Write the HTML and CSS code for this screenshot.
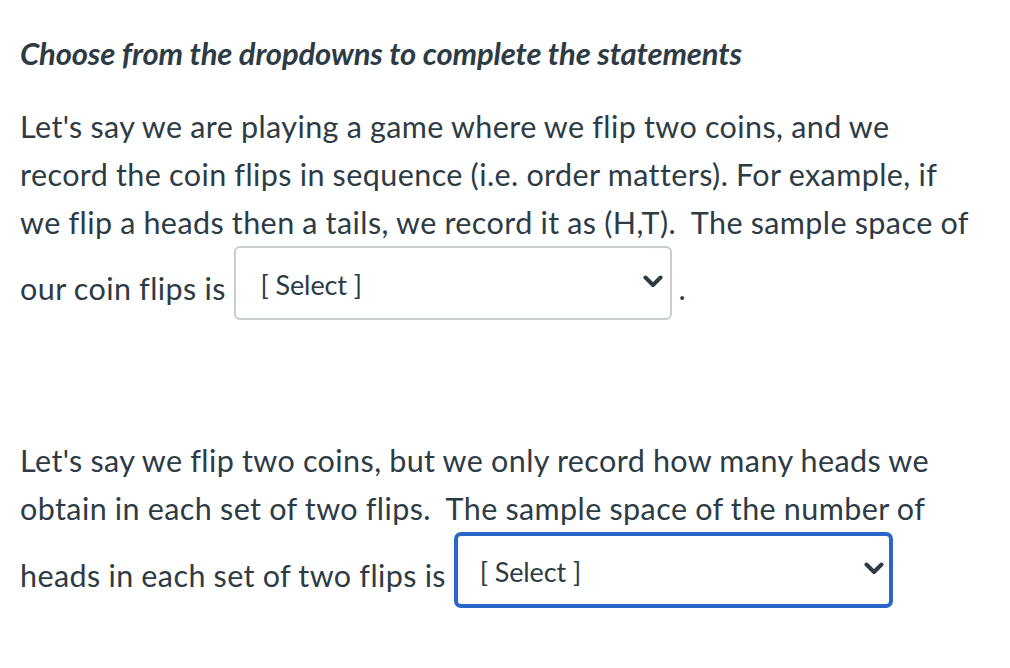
FILE: index.html
```html
<!DOCTYPE html>
<html>
<head>
<meta charset="utf-8">
<link rel="stylesheet" href="styles.css">
</head>
<body>
<div class="quiz">
  <h2 class="title">Choose from the dropdowns to complete the statements</h2>
  <p class="text">Let's say we are playing a game where we flip two coins, and we record the coin flips in sequence (i.e. order matters). For example, if we flip a heads then a tails, we record it as (H,T).&nbsp; The sample space of our coin flips is <span class="select trailing"><span class="select-label">[ Select ]</span><svg class="chev" viewBox="0 0 20 13" width="20" height="13"><path d="M2.5 2.5 L10 10 L17.5 2.5" fill="none" stroke="#2d3b45" stroke-width="4" stroke-linecap="round" stroke-linejoin="round"/></svg></span>.</p>
  <p class="spacer">&nbsp;</p>
  <p class="text">Let's say we flip two coins, but we only record how many heads we obtain in each set of two flips.&nbsp; The sample space of the number of heads in each set of two flips is <span class="select focused"><span class="select-label">[ Select ]</span><svg class="chev" viewBox="0 0 20 13" width="20" height="13"><path d="M2.5 2.5 L10 10 L17.5 2.5" fill="none" stroke="#2d3b45" stroke-width="4" stroke-linecap="round" stroke-linejoin="round"/></svg></span></p>
</div>
</body>
</html>
```
FILE: styles.css
```css
html, body {
  margin: 0;
  padding: 0;
  background: #ffffff;
}
body {
  font-family: Lato, "Open Sans", sans-serif;
  color: #2d3b45;
}
.quiz {
  padding: 0 20px;
  width: 962px;
}
.title {
  font-size: 31px;
  font-weight: 700;
  font-style: italic;
  letter-spacing: -0.15px;
  margin: 33px 0 0 0;
  line-height: 40px;
}
.text {
  font-size: 30.5px;
  letter-spacing: 0.42px;
  word-spacing: -0.5px;
  line-height: 48px;
  margin: 29px 0 0 0;
}
.spacer {
  font-size: 30.5px;
  line-height: 48px;
  margin: 34px 0;
}
.spacer + .text {
  margin-top: 0;
}
.select {
  display: inline-block;
  position: relative;
  box-sizing: border-box;
  width: 438px;
  height: 74px;
  border: 2px solid #c7cdd1;
  border-radius: 6px;
  padding: 0 40px 0 25px;
  line-height: 74px;
  vertical-align: -20px;
  overflow: hidden;
  font-size: 27px;
  letter-spacing: -0.1px;
  word-spacing: 0;
  background: #fff;
  white-space: nowrap;
}
.select.trailing {
  margin-right: 7px;
}
.select.focused {
  border: 4px solid #2a66c5;
  width: 439px;
  height: 76px;
  line-height: 72px;
  padding-left: 22px;
  border-radius: 7px;
  vertical-align: -21px;
}
.chev {
  position: absolute;
  right: 7px;
  top: 50%;
  margin-top: -8px;
}
.focused .chev {
  right: 5px;
}
```
